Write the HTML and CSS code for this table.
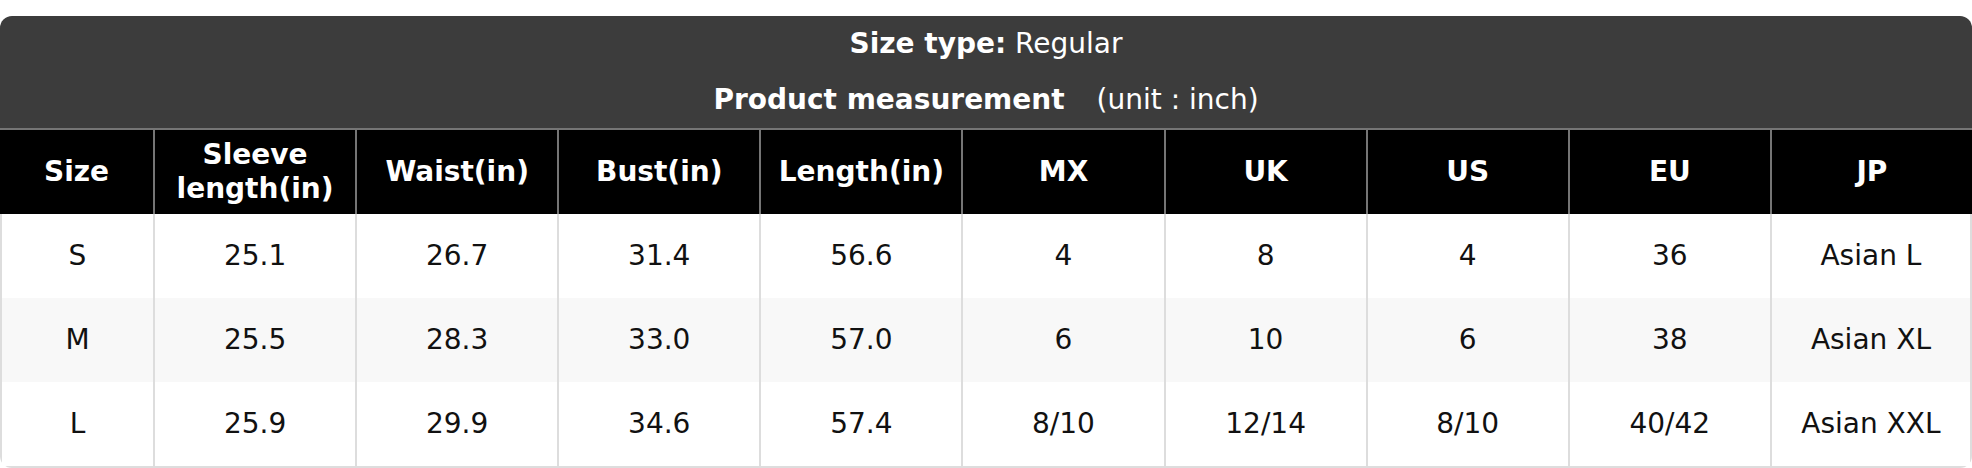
FILE: index.html
```html
<!DOCTYPE html>
<html>
<head>
<meta charset="utf-8">
<link rel="stylesheet" href="styles.css">
</head>
<body>
<div class="chart">
  <div class="caption">
    <div class="cap-line"><b>Size type:</b> Regular</div>
    <div class="cap-line"><b>Product measurement</b><span class="unit">(unit : inch)</span></div>
  </div>
  <table class="sizes">
    <colgroup>
      <col class="col-size">
      <col><col><col><col><col><col><col><col><col>
    </colgroup>
    <thead>
      <tr>
        <th>Size</th>
        <th>Sleeve<br>length(in)</th>
        <th>Waist(in)</th>
        <th>Bust(in)</th>
        <th>Length(in)</th>
        <th>MX</th>
        <th>UK</th>
        <th>US</th>
        <th>EU</th>
        <th>JP</th>
      </tr>
    </thead>
    <tbody>
      <tr>
        <td>S</td><td>25.1</td><td>26.7</td><td>31.4</td><td>56.6</td><td>4</td><td>8</td><td>4</td><td>36</td><td>Asian L</td>
      </tr>
      <tr>
        <td>M</td><td>25.5</td><td>28.3</td><td>33.0</td><td>57.0</td><td>6</td><td>10</td><td>6</td><td>38</td><td>Asian XL</td>
      </tr>
      <tr>
        <td>L</td><td>25.9</td><td>29.9</td><td>34.6</td><td>57.4</td><td>8/10</td><td>12/14</td><td>8/10</td><td>40/42</td><td>Asian XXL</td>
      </tr>
    </tbody>
  </table>
</div>
</body>
</html>
```

FILE: styles.css
```css
html, body {
  margin: 0;
  padding: 0;
  background: #ffffff;
}
body {
  padding-top: 16px;
  font-family: "DejaVu Sans", "Liberation Sans", sans-serif;
  font-size: 28px;
  color: #111111;
}
.chart {
  border-radius: 12px;
  overflow: hidden;
}
.caption {
  background: #3c3c3c;
  color: #ffffff;
  text-align: center;
}
.cap-line {
  height: 56px;
  line-height: 56px;
}
.unit {
  margin-left: 32px;
}
.sizes {
  width: 100%;
  table-layout: fixed;
  border-collapse: separate;
  border-spacing: 0;
}
.col-size {
  width: 153px;
}
.sizes th {
  background: #000000;
  color: #ffffff;
  font-weight: bold;
  line-height: 34px;
  padding: 8px 4px;
  height: 68px;
  border-top: 2px solid #757575;
  border-left: 2px solid #757575;
  text-align: center;
  vertical-align: middle;
}
.sizes th:first-child {
  border-left: none;
}
.sizes td {
  line-height: 34px;
  padding: 25px 4px;
  text-align: center;
  border-left: 2px solid #dddddd;
}
.sizes td:first-child {
  border-left: 2px solid #dddddd;
}
.sizes td:last-child {
  border-right: 2px solid #dddddd;
}
.sizes tbody tr:nth-child(2) td {
  background: #f8f8f8;
}
.sizes tbody tr:last-child td {
  border-bottom: 2px solid #dddddd;
}
```
